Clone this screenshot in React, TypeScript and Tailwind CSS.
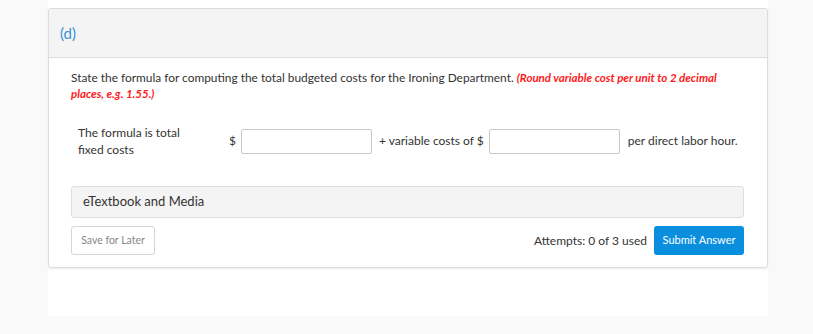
export default function App() {
  return (
    <div className="min-h-screen bg-[#f9f9f9]" style={{ fontFamily: 'Lato, "Open Sans", sans-serif' }}>
      <div className="ml-[48px] w-[720px] h-[316px] bg-white pt-[8px]">
        <div className="border border-[#dcdcdc] rounded-[3px] shadow-[0_1px_2px_rgba(0,0,0,0.08)] bg-white">
          {/* Header */}
          <div className="h-[49px] bg-[#f4f4f4] border-b border-[#dcdcdc] flex items-center px-[11px] rounded-t-[3px]">
            <span className="text-[15px] text-[#3a8fd8]">(d)</span>
          </div>

          {/* Body */}
          <div className="pl-[22px] pr-[23px] pt-[12px] pb-[12px]">
            <p className="text-[11.9px] leading-[16px] text-[#333] w-[660px]">
              State the formula for computing the total budgeted costs for the Ironing Department.{' '}
              <span className="font-bold italic text-[11.5px] text-[#ff1a1a]">
                (Round variable cost per unit to 2 decimal places, e.g. 1.55.)
              </span>
            </p>

            <div className="flex items-center mt-[22px] pl-[7px] text-[12px] text-[#333]">
              <div className="w-[110px] leading-[17px]">The formula is total fixed costs</div>
              <span className="ml-[41px] mr-[5px]">$</span>
              <div className="w-[131px] h-[25px] border border-[#c8c8c8] rounded-[2px] bg-white" />
              <span className="ml-[7px] mr-[5px]">+ variable costs of $</span>
              <div className="w-[131px] h-[25px] border border-[#c8c8c8] rounded-[2px] bg-white" />
              <span className="ml-[8px]">per direct labor hour.</span>
            </div>

            <div className="mt-[28px] h-[32px] flex items-center px-[11px] bg-[#f4f4f4] border border-[#dedede] rounded-[3px] text-[13px] text-[#333]">
              eTextbook and Media
            </div>

            <div className="flex items-center mt-[8px]">
              <button className="h-[29px] w-[84px] border border-[#d6d6d6] rounded-[3px] bg-white text-[10.5px] text-[#888]">
                Save for Later
              </button>
              <div className="ml-auto flex items-center">
                <span className="text-[12px] text-[#333] mr-[7px]">Attempts: 0 of 3 used</span>
                <button className="h-[29px] w-[90px] rounded-[3px] bg-[#0a8fdf] text-white text-[11px]">
                  Submit Answer
                </button>
              </div>
            </div>
          </div>
        </div>
      </div>
    </div>
  );
}
